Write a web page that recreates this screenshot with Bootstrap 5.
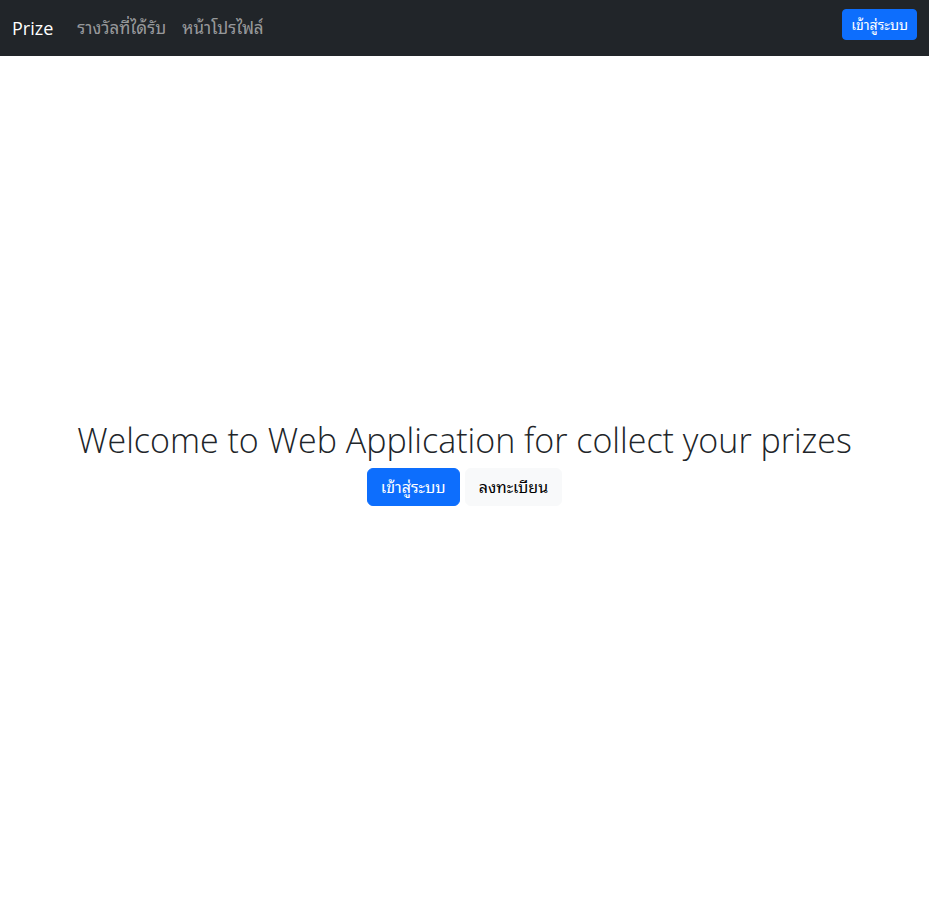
<!DOCTYPE html>
<html lang="th">
<head>
<meta charset="utf-8">
<meta name="viewport" content="width=device-width, initial-scale=1">
<title>Prize</title>
<link href="https://cdn.jsdelivr.net/npm/bootstrap@5.3.0/dist/css/bootstrap.min.css" rel="stylesheet">
<style>
body { font-family: "Open Sans", "Noto Sans Thai Looped", "Loma", "Waree", "Garuda", "Noto Sans Thai", sans-serif; }
.navbar { min-height: 56px; }
.navbar-brand { font-size: 18px; font-weight: 500; }
.nav-link { font-size: 17px; line-height: 24px; }
.btn-sm { font-size: 14px; line-height: 21px; }
.welcome-title { font-size: 34px; font-weight: 300; line-height: 48px; }
.welcome-actions { gap: 5px; }
.welcome-actions .btn { padding-left: 13px; padding-right: 13px; }
</style>
</head>
<body>
<nav class="navbar navbar-expand-md navbar-dark bg-dark fixed-top py-2">
  <div class="container-fluid">
    <a class="navbar-brand" href="#">Prize</a>
    <div class="navbar-nav me-auto">
      <a class="nav-link" href="#">รางวัลที่ได้รับ</a>
      <a class="nav-link" href="#">หน้าโปรไฟล์</a>
    </div>
    <button type="button" class="btn btn-primary btn-sm mb-2">เข้าสู่ระบบ</button>
  </div>
</nav>
<main class="min-vh-100 d-flex flex-column justify-content-center align-items-center text-center">
  <h1 class="welcome-title mb-1">Welcome to Web Application for collect your prizes</h1>
  <div class="d-flex welcome-actions">
    <button type="button" class="btn btn-primary">เข้าสู่ระบบ</button>
    <button type="button" class="btn btn-light">ลงทะเบียน</button>
  </div>
</main>
<script src="https://cdn.jsdelivr.net/npm/bootstrap@5.3.0/dist/js/bootstrap.bundle.min.js"></script>
</body>
</html>
